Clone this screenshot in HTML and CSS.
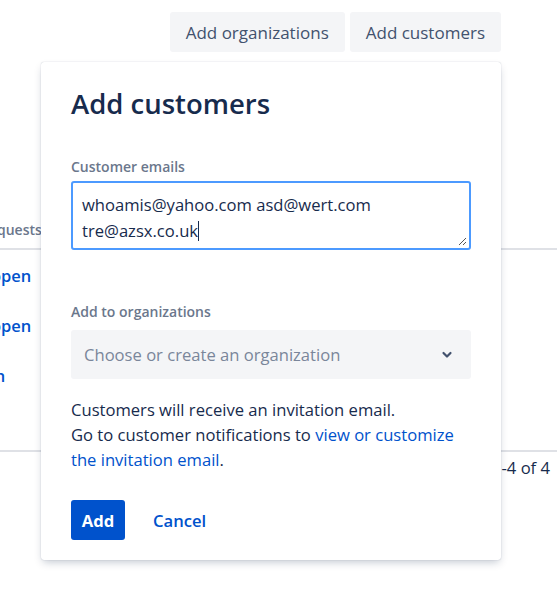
FILE: index.html
```html
<!DOCTYPE html>
<html>
<head>
<meta charset="utf-8">
<link rel="stylesheet" href="styles.css">
</head>
<body>
<div class="page">
  <div class="toolbar">
    <button class="btn-subtle">Add organizations</button>
    <button class="btn-subtle">Add customers</button>
  </div>
  <div class="table">
    <div class="thead"><span class="th">Requests</span></div>
    <div class="row"><a class="cell-link">open</a></div>
    <div class="row"><a class="cell-link">open</a></div>
    <div class="row"><a class="cell-link cell-far">open</a></div>
    <div class="row"></div>
    <div class="tfoot"><span class="pager">1-4 of 4</span></div>
  </div>

  <div class="dialog">
    <h1 class="title">Add customers</h1>
    <label class="label">Customer emails</label>
    <div class="textarea">
      <div class="ta-text">whoamis@yahoo.com asd@wert.com<br>tre@azsx.co.uk<span class="caret"></span></div>
      <svg class="grip" width="9" height="9" viewBox="0 0 9 9"><path d="M8 1 L1 8 M8 5 L5 8" stroke="#555" stroke-width="1"/></svg>
    </div>
    <label class="label label-org">Add to organizations</label>
    <div class="select">
      <span class="placeholder">Choose or create an organization</span>
      <svg class="chev" width="12" height="8" viewBox="0 0 12 8"><path d="M2.5 2 L6 5.5 L9.5 2" fill="none" stroke="#42526E" stroke-width="2.2" stroke-linecap="round" stroke-linejoin="round"/></svg>
    </div>
    <p class="info">Customers will receive an invitation email.<br>Go to customer notifications to <a class="link">view or customize the invitation email</a>.</p>
    <div class="actions">
      <button class="btn-primary">Add</button>
      <button class="btn-link">Cancel</button>
    </div>
  </div>
</div>
</body>
</html>
```

FILE: styles.css
```css
* { box-sizing: border-box; }
html, body { margin: 0; padding: 0; background: #fff; }
body { font-family: "Open Sans", "Noto Sans", sans-serif; color: #172B4D; }
.page { position: relative; width: 557px; height: 612px; overflow: hidden; }

.toolbar { display: flex; justify-content: flex-end; gap: 5px; padding: 12px 56px 0 0; }
.btn-subtle { height: 40px; border: 0; border-radius: 3px; background: #F4F5F7; color: #42526E; font-family: inherit; font-size: 17px; padding: 0 16px; }

.table { margin-top: 166px; }
.thead { height: 32px; border-bottom: 2px solid #DFE1E6; }
.th { display: inline-block; margin-left: -20px; font-size: 14px; font-weight: 600; color: #6B778C; padding-top: 2px; }
.row { height: 50px; padding-top: 14px; }
.cell-link { display: inline-block; margin-left: -9px; color: #0052CC; font-size: 16.5px; font-weight: 600; }
.cell-far { margin-left: -35px; }
.tfoot { border-top: 2px solid #DFE1E6; height: 60px; text-align: right; padding-top: 4px; }
.pager { display: inline-block; margin-right: 7px; font-size: 16.6px; color: #172B4D; }

.dialog { position: absolute; left: 41px; top: 62px; width: 460px; height: 498px; background: #fff; border-radius: 3px; box-shadow: 0 0 1px rgba(9,30,66,0.31), 0 4px 8px -2px rgba(9,30,66,0.25); padding: 22px 30px 0 30px; }
.title { margin: 0; font-size: 27.5px; font-weight: 600; line-height: 40px; color: #172B4D; }
.label { display: block; font-size: 14px; font-weight: 600; color: #6B778C; margin-top: 35px; line-height: 16px; }
.textarea { position: relative; margin-top: 6px; height: 69px; border: 2px solid #4C9AFF; border-radius: 3px; padding: 9px 9px; }
.ta-text { font-size: 16.6px; line-height: 26px; color: #172B4D; }
.caret { display: inline-block; width: 1px; height: 20px; background: #172B4D; vertical-align: -4px; }
.grip { position: absolute; right: 2px; bottom: 2px; }
.label-org { margin-top: 54px; }
.select { margin-top: 10px; height: 49px; background: #F4F5F7; border-radius: 3px; display: flex; align-items: center; justify-content: space-between; padding: 0 18px 0 13px; }
.placeholder { font-size: 16.6px; color: #7A869A; }
.info { margin: 18px 0 0; font-size: 16.6px; line-height: 25px; color: #172B4D; }
.link { color: #0052CC; }
.actions { display: flex; align-items: center; gap: 14px; margin-top: 28px; }
.btn-primary { height: 40px; width: 54px; border: 0; border-radius: 3px; background: #0052CC; color: #fff; font-family: inherit; font-size: 16.6px; font-weight: 700; padding: 0; }
.btn-link { border: 0; background: none; color: #0052CC; font-family: inherit; font-size: 16.6px; font-weight: 600; padding: 0 14px; }
```
